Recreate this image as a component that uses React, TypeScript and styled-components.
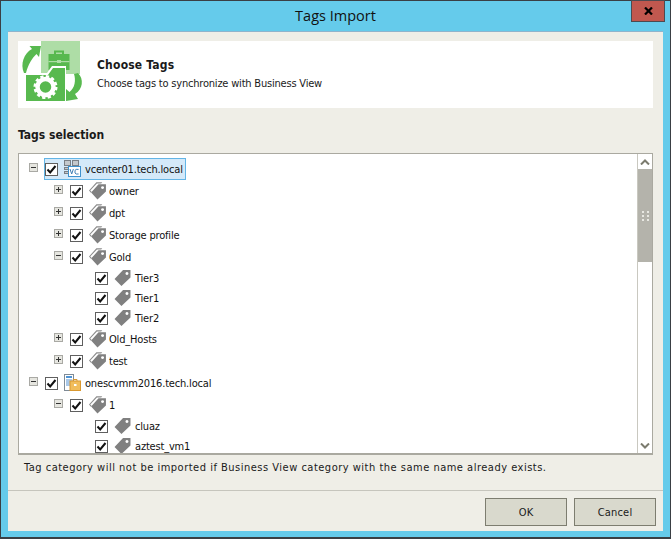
import React from 'react';
import styled, {createGlobalStyle} from 'styled-components';

const GlobalStyle = createGlobalStyle`
  html, body {
    margin: 0;
    padding: 0;
    background: #65cbeb;
  }
  * {
    box-sizing: border-box;
  }
`;

const Window = styled.div`
  width: 671px;
  height: 539px;
  display: flex;
  flex-direction: column;
  background: #65cbeb;
  border: 1px solid #3a3f44;
  border-bottom-width: 2px;
  font-family: "DejaVu Sans", "Liberation Sans", Arial, sans-serif;
  font-stretch: condensed;
  font-size: 11px;
  color: #1a1a1a;
`;

const TitleBar = styled.div`
  height: 30px;
  flex: none;
  position: relative;
  display: flex;
  align-items: center;
  justify-content: center;
`;

const Title = styled.div`
  font-family: "Open Sans", sans-serif;
  font-stretch: normal;
  font-size: 14.5px;
  color: #111;
  margin-top: -1px;
`;

const CloseButton = styled.div`
  position: absolute;
  top: -1px;
  right: 5px;
  width: 34px;
  height: 22px;
  background: #c0584f;
  border: 1px solid #4d4a50;
  display: flex;
  align-items: center;
  justify-content: center;
`;

const Body = styled.div`
  flex: none;
  margin: 0 7px 0 7px;
  height: 500px;
  background: #efeee7;
  border-top: 1px solid #8fb4cc;
  display: flex;
  flex-direction: column;
`;

const Content = styled.div`
  flex: 1;
  padding: 9px 10px 0 10px;
  display: flex;
  flex-direction: column;
`;

const Banner = styled.div`
  height: 67px;
  flex: none;
  background: #fff;
  display: flex;
  align-items: stretch;
`;

const BannerLogo = styled.div`
  width: 79px;
  flex: none;
`;

const BannerText = styled.div`
  display: flex;
  flex-direction: column;
  padding-top: 17px;
`;

const BannerTitle = styled.div`
  font-weight: bold;
  font-size: 12px;
  line-height: 15px;
  letter-spacing: 0.2px;
`;

const BannerSub = styled.div`
  line-height: 14px;
  margin-top: 4px;
  letter-spacing: -0.2px;
`;

const SectionTitle = styled.div`
  font-weight: bold;
  font-size: 12px;
  line-height: 15px;
  margin-top: 20px;
  margin-bottom: 10px;
`;

const TreeBox = styled.div`
  height: 302px;
  flex: none;
  border: 1px solid #aaa9a0;
  border-bottom-width: 2px;
  background: #fff;
  display: flex;
  overflow: hidden;
`;

const Tree = styled.div`
  flex: 1;
  padding-top: 4px;
  overflow: hidden;
`;

const Row = styled.div<{ $level: number; $leaf?: boolean }>`
  height: ${p => (p.$leaf ? 20 : 22)}px;
  padding-left: ${p => 10 + p.$level * 25}px;
  display: flex;
  align-items: center;
`;

const Expander = styled.div<{ $hidden?: boolean }>`
  width: 9px;
  height: 9px;
  margin-top: -3px;
  margin-right: 7px;
  flex: none;
  position: relative;
  border: 1px solid ${p => (p.$hidden ? 'transparent' : '#a9a9a4')};
  background: ${p => (p.$hidden ? 'transparent' : '#e6e6e0')};
`;

const ExpanderBar = styled.div<{ $vertical?: boolean }>`
  position: absolute;
  background: #333;
  ${p => (p.$vertical
    ? 'left: 3px; top: 1px; width: 1px; height: 5px;'
    : 'left: 1px; top: 3px; width: 5px; height: 1px;')}
`;

const Node = styled.div<{ $selected?: boolean }>`
  height: 22px;
  display: flex;
  align-items: center;
  padding-right: ${p => (p.$selected ? 2 : 0)}px;
  margin-left: -1px;
  border: 1px solid ${p => (p.$selected ? '#63b5e6' : 'transparent')};
  background: ${p => (p.$selected ? '#d4e9f9' : 'transparent')};
`;

const CheckBox = styled.div`
  width: 13px;
  height: 13px;
  flex: none;
  border: 1px solid #5f5f5f;
  background: #fff;
  display: flex;
  align-items: center;
  justify-content: center;
`;

const NodeIcon = styled.div<{ $tight?: boolean }>`
  width: 16px;
  height: 16px;
  flex: none;
  margin-left: 6px;
  margin-right: ${p => (p.$tight ? 4 : 5)}px;
  margin-top: -3px;
`;

const NodeLabel = styled.span`
  white-space: nowrap;
  color: #111;
  letter-spacing: -0.18px;
`;

const Scrollbar = styled.div`
  width: 15px;
  flex: none;
  display: flex;
  flex-direction: column;
  border-left: 1px solid #c9c8c0;
`;

const ScrollButton = styled.div`
  height: 15px;
  flex: none;
  background: #fff;
  display: flex;
  align-items: center;
  justify-content: center;
`;

const ScrollThumb = styled.div`
  height: 93px;
  flex: none;
  background: #b4b3ab;
  display: flex;
  align-items: center;
  justify-content: center;
`;

const ScrollTrack = styled.div`
  flex: 1;
  background: #fff;
`;

const Grip = styled.div`
  display: grid;
  grid-template-columns: 2px 2px;
  gap: 2px 3px;
`;

const GripDot = styled.div`
  width: 2px;
  height: 2px;
  background: #e8e8e2;
`;

const Note = styled.div`
  padding-left: 6px;
  margin-top: 6px;
  line-height: 14px;
  letter-spacing: 0.5px;
`;

const Footer = styled.div`
  height: 41px;
  flex: none;
  border-top: 1px solid #c6c5bd;
  padding: 7px 7px 0 0;
  display: flex;
  justify-content: flex-end;
  gap: 7px;
`;

const Button = styled.div`
  width: 82px;
  height: 28px;
  background: #d9d9cd;
  border: 1px solid #7d7d70;
  display: flex;
  align-items: center;
  justify-content: center;
  letter-spacing: 0.2px;
`;

const Check = () => (
    <svg width="11" height="11" viewBox="0 0 11 11">
        <path d="M1.5 5.5 L4.2 8.5 L9.5 2" fill="none" stroke="#111" strokeWidth="2"/>
    </svg>
);

const TagIcon = () => (
    <svg width="17" height="17" viewBox="0 0 16 16">
        <path
            fillRule="evenodd"
            fill="#808080"
            d="M8.5 1 H15.5 V8 L7 16 L0.5 9.5 Z M12.2 2.8 a1.4 1.4 0 1 0 0.01 0 Z"
        />
    </svg>
);

const DoubleTagIcon = () => (
    <svg width="18" height="18" viewBox="0 0 17 17">
        <path fill="#8c8c8c" d="M7 0.2 H12.5 L11.5 1.4 H7.5 L1.2 8 L2.6 9.4 L1.8 10.2 L0 8 Z"/>
        <path
            fillRule="evenodd"
            fill="#808080"
            d="M9 2.2 H16 V9 L8 16.5 L2 10 Z M12.8 3.9 a1.4 1.4 0 1 0 0.01 0 Z"
        />
    </svg>
);

const VCenterIcon = () => (
    <svg width="17" height="17" viewBox="0 0 17 17">
        <rect x="0.5" y="0.5" width="6" height="5" fill="#c4c8cc" stroke="#7a7f85"/>
        <rect x="8.5" y="0.5" width="6" height="5" fill="#c4c8cc" stroke="#7a7f85"/>
        <rect x="0.5" y="7.5" width="4" height="2" fill="#c4c8cc" stroke="#7a7f85"/>
        <rect x="0.5" y="11.5" width="4" height="2" fill="#c4c8cc" stroke="#7a7f85"/>
        <rect x="4.5" y="6.5" width="12" height="10" fill="#fff" stroke="#3f92cf"/>
        <path d="M6 9 L7.7 14 L9.4 9" fill="none" stroke="#3f7fb5" strokeWidth="1"/>
        <path d="M14.6 9.4 H12.2 L11 10.4 V13 L12.2 14 H14.6" fill="none" stroke="#3f7fb5" strokeWidth="1"/>
    </svg>
);

const ScvmmIcon = () => (
    <svg width="17" height="17" viewBox="0 0 17 17">
        <rect x="0.5" y="0.5" width="9" height="16" fill="#fff" stroke="#7f8b96"/>
        <rect x="2" y="2" width="6" height="2" fill="#4f94d4"/>
        <rect x="2" y="5" width="6" height="7" fill="#a9c8e8"/>
        <path d="M9 7 V5.5 H13 V7" fill="none" stroke="#d9982f"/>
        <rect x="6" y="7" width="10.5" height="9.5" fill="#f1bd5c" stroke="#d9982f"/>
        <rect x="10" y="10" width="2.5" height="2" fill="#fff"/>
    </svg>
);

const BannerArt = () => (
    <svg width="79" height="67" viewBox="0 0 79 67">
        <path d="M23 0 H62 V33 H23 Z" fill="#aedda6"/>
        <path d="M16 0 H23 V7 Z" fill="#fff"/>
        <path d="M30.5 13 H36 V9.5 H46 V13 H51.5 V29 H30.5 Z M38 11.5 V13 H44 V11.5 Z" fill="#58b94f" fillRule="evenodd"/>
        <rect x="30.5" y="20" width="21" height="1.2" fill="#aedda6"/>
        <rect x="39" y="19" width="4" height="3" fill="#aedda6"/>
        <path d="M6 32 H29 L34 25 H48 V61 H6 Z" fill="#fff"/>
        <path d="M8 34 H30 L35 27 H47 V60 H8 Z" fill="#58b94f"/>
        <circle cx="27.5" cy="46" r="8" fill="none" stroke="#fff" strokeWidth="4.5"/>
        <circle cx="27.5" cy="46" r="10.5" fill="none" stroke="#fff" strokeWidth="3" strokeDasharray="3.2 2.3"/>
        <path d="M6 32 C2 23 6 12 14 8 L11.5 5 L23 5 L21 16 L18.5 13 C14 17 10 24 8 32 Z" fill="#58b94f"/>
        <path d="M60 32 C66 38 65 48 57 53 L60 58 L48 60 L48 48 L51.5 51 C57 47 58 39 56 33 Z" fill="#58b94f"/>
    </svg>
);

type TreeNode = {
    label: string;
    level: number;
    icon: 'vcenter' | 'scvmm' | 'category' | 'tag';
    expander?: 'plus' | 'minus';
    selected?: boolean;
};

const nodes: TreeNode[] = [
    {label: 'vcenter01.tech.local', level: 0, icon: 'vcenter', expander: 'minus', selected: true},
    {label: 'owner', level: 1, icon: 'category', expander: 'plus'},
    {label: 'dpt', level: 1, icon: 'category', expander: 'plus'},
    {label: 'Storage profile', level: 1, icon: 'category', expander: 'plus'},
    {label: 'Gold', level: 1, icon: 'category', expander: 'minus'},
    {label: 'Tier3', level: 2, icon: 'tag'},
    {label: 'Tier1', level: 2, icon: 'tag'},
    {label: 'Tier2', level: 2, icon: 'tag'},
    {label: 'Old_Hosts', level: 1, icon: 'category', expander: 'plus'},
    {label: 'test', level: 1, icon: 'category', expander: 'plus'},
    {label: 'onescvmm2016.tech.local', level: 0, icon: 'scvmm', expander: 'minus'},
    {label: '1', level: 1, icon: 'category', expander: 'minus'},
    {label: 'cluaz', level: 2, icon: 'tag'},
    {label: 'aztest_vm1', level: 2, icon: 'tag'},
];

const icons = {
    vcenter: <VCenterIcon/>,
    scvmm: <ScvmmIcon/>,
    category: <DoubleTagIcon/>,
    tag: <TagIcon/>,
};

const App: React.FunctionComponent = () => {
    return (
        <Window>
            <GlobalStyle/>
            <TitleBar>
                <Title>Tags Import</Title>
                <CloseButton>
                    <svg width="9" height="8" viewBox="0 0 9 8">
                        <path d="M1 0.5 L8 7.5 M8 0.5 L1 7.5" stroke="#000" strokeWidth="2.2"/>
                    </svg>
                </CloseButton>
            </TitleBar>
            <Body>
                <Content>
                    <Banner>
                        <BannerLogo><BannerArt/></BannerLogo>
                        <BannerText>
                            <BannerTitle>Choose Tags</BannerTitle>
                            <BannerSub>Choose tags to synchronize with Business View</BannerSub>
                        </BannerText>
                    </Banner>
                    <SectionTitle>Tags selection</SectionTitle>
                    <TreeBox>
                        <Tree>
                            {nodes.map(node => (
                                <Row key={node.label} $level={node.level} $leaf={node.icon === 'tag'}>
                                    <Expander $hidden={!node.expander}>
                                        {node.expander && <ExpanderBar/>}
                                        {node.expander === 'plus' && <ExpanderBar $vertical/>}
                                    </Expander>
                                    <Node $selected={node.selected}>
                                        <CheckBox><Check/></CheckBox>
                                        <NodeIcon $tight={node.icon === 'category'}>{icons[node.icon]}</NodeIcon>
                                        <NodeLabel>{node.label}</NodeLabel>
                                    </Node>
                                </Row>
                            ))}
                        </Tree>
                        <Scrollbar>
                            <ScrollButton>
                                <svg width="10" height="6" viewBox="0 0 10 6">
                                    <path d="M1 5.5 L5 1.5 L9 5.5" fill="none" stroke="#7b7b6e" strokeWidth="2"/>
                                </svg>
                            </ScrollButton>
                            <ScrollThumb>
                                <Grip>
                                    {[0, 1, 2, 3, 4, 5].map(i => <GripDot key={i}/>)}
                                </Grip>
                            </ScrollThumb>
                            <ScrollTrack/>
                            <ScrollButton>
                                <svg width="10" height="6" viewBox="0 0 10 6">
                                    <path d="M1 0.5 L5 4.5 L9 0.5" fill="none" stroke="#7b7b6e" strokeWidth="2"/>
                                </svg>
                            </ScrollButton>
                        </Scrollbar>
                    </TreeBox>
                    <Note>Tag category will not be imported if Business View category with the same name already exists.</Note>
                </Content>
                <Footer>
                    <Button>OK</Button>
                    <Button>Cancel</Button>
                </Footer>
            </Body>
        </Window>
    );
};

export default App;
